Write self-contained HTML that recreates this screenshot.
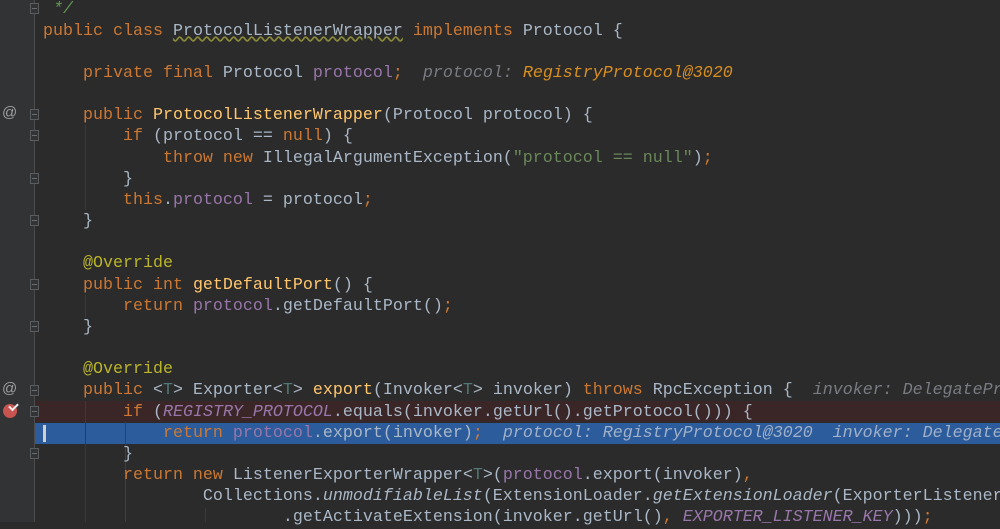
<!DOCTYPE html>
<html><head><meta charset="utf-8"><style>
html,body{margin:0;padding:0;background:#2b2b2b;width:1000px;height:522px;overflow:hidden;}
#g{position:absolute;left:0;top:0;width:35px;height:522px;background:#313335;}
#gl{position:absolute;left:34px;top:0;width:1px;height:522px;background:#4a4c4e;}
.l{position:absolute;left:43px;margin-top:1px;height:21.17px;line-height:21.17px;white-space:pre;font-family:"Liberation Mono",monospace;font-size:16.67px;color:#a9b7c6;}
.k{color:#cc7832}.f{color:#9876aa}.s{color:#6a8759}.a{color:#bbb529}.m{color:#ffc66d}.c{color:#629755}.t{color:#507874}
.i{font-style:italic}
.h{font-style:italic;color:#787c82}.ho{font-style:italic;color:#d98e1f}
.hb{font-style:italic;color:#9fb0c8}
.row{position:absolute;left:35px;width:965px;height:21.17px;}
.fm{position:absolute;left:30px;width:9px;height:11px;border:1px solid #5a5d60;background:#313335;box-sizing:border-box;}
.fm:after{content:"";position:absolute;left:1px;top:4px;width:5px;height:1px;background:#6a6d70;}
.ig{position:absolute;width:1px;background:#3a3a3a;}
.at{position:absolute;left:2px;font-family:"Liberation Sans",sans-serif;font-size:15px;color:#a0a0a0;}
</style></head><body>
<div id="g"></div><div id="gl"></div>
<div class="row" style="top:401px;background:#3b2627"></div>
<div class="row" style="top:422.5px;background:#2d5c9c"></div>
<div class="ig" style="left:85px;top:125px;height:85px"></div>
<div class="ig" style="left:85px;top:295px;height:22px"></div>
<div class="ig" style="left:85px;top:401px;height:121px"></div>
<div class="ig" style="left:125px;top:422px;height:100px;background:#3f3f3f"></div>
<div class="ig" style="left:205px;top:508px;height:14px"></div>
<div style="position:absolute;left:43px;top:425px;width:3px;height:17px;background:#d0d0d0"></div>
<div class="fm" style="top:3px"></div>
<div class="fm" style="top:109px"></div>
<div class="fm" style="top:130px"></div>
<div class="fm" style="top:173px"></div>
<div class="fm" style="top:215px"></div>
<div class="fm" style="top:279px"></div>
<div class="fm" style="top:321px"></div>
<div class="fm" style="top:385px"></div>
<div class="fm" style="top:406px"></div>
<div class="fm" style="top:448px"></div>
<div class="at" style="top:104px">@</div>
<div class="at" style="top:380px">@</div>
<div style="position:absolute;left:3px;top:404px;width:14px;height:14px;border-radius:50%;background:#c75450"></div>
<div style="position:absolute;left:9px;top:403px;width:7px;height:4px;border-left:2px solid #eee;border-bottom:2px solid #eee;transform:rotate(-45deg)"></div>

<div class="l" style="top:-1.6px"><span class="c i"> */</span></div>
<div class="l" style="top:19.6px"><span class="k">public class </span><span style="text-decoration:underline wavy #8a8a3a">ProtocolListenerWrapper</span><span class="k"> implements </span>Protocol {</div>
<div class="l" style="top:62px">    <span class="k">private final </span>Protocol <span class="f">protocol</span><span class="k">;</span>  <span class="h">protocol: </span><span class="ho">RegistryProtocol@3020</span></div>
<div class="l" style="top:104.3px">    <span class="k">public </span><span class="m">ProtocolListenerWrapper</span>(Protocol protocol) {</div>
<div class="l" style="top:125.4px">        <span class="k">if </span>(protocol == <span class="k">null</span>) {</div>
<div class="l" style="top:146.6px">            <span class="k">throw new </span>IllegalArgumentException(<span class="s">"protocol == null"</span>)<span class="k">;</span></div>
<div class="l" style="top:167.8px">        }</div>
<div class="l" style="top:188.9px">        <span class="k">this</span>.<span class="f">protocol</span> = protocol<span class="k">;</span></div>
<div class="l" style="top:210.1px">    }</div>
<div class="l" style="top:252.4px">    <span class="a">@Override</span></div>
<div class="l" style="top:273.6px">    <span class="k">public int </span><span class="m">getDefaultPort</span>() {</div>
<div class="l" style="top:294.8px">        <span class="k">return </span><span class="f">protocol</span>.getDefaultPort()<span class="k">;</span></div>
<div class="l" style="top:315.9px">    }</div>
<div class="l" style="top:358.3px">    <span class="a">@Override</span></div>
<div class="l" style="top:379.4px">    <span class="k">public </span>&lt;<span class="t">T</span>&gt; Exporter&lt;<span class="t">T</span>&gt; <span class="m">export</span>(Invoker&lt;<span class="t">T</span>&gt; invoker) <span class="k">throws </span>RpcException {  <span class="h">invoker: DelegatePr</span></div>
<div class="l" style="top:400.6px">        <span class="k">if </span>(<span class="f i">REGISTRY_PROTOCOL</span>.equals(invoker.getUrl().getProtocol())) {</div>
<div class="l" style="top:421.7px">            <span class="k">return </span><span class="f">protocol</span>.export(invoker)<span class="k">;</span>  <span class="hb">protocol: RegistryProtocol@3020  invoker: Delegate</span></div>
<div class="l" style="top:442.9px">        }</div>
<div class="l" style="top:464.1px">        <span class="k">return new </span>ListenerExporterWrapper&lt;<span class="t">T</span>&gt;(<span class="f">protocol</span>.export(invoker)<span class="k">,</span></div>
<div class="l" style="top:485.2px">                Collections.<span class="i">unmodifiableList</span>(ExtensionLoader.<span class="i">getExtensionLoader</span>(ExporterListener</div>
<div class="l" style="top:506.4px">                        .getActivateExtension(invoker.getUrl()<span class="k">, </span><span class="f i">EXPORTER_LISTENER_KEY</span>)))<span class="k">;</span></div>
</body></html>
